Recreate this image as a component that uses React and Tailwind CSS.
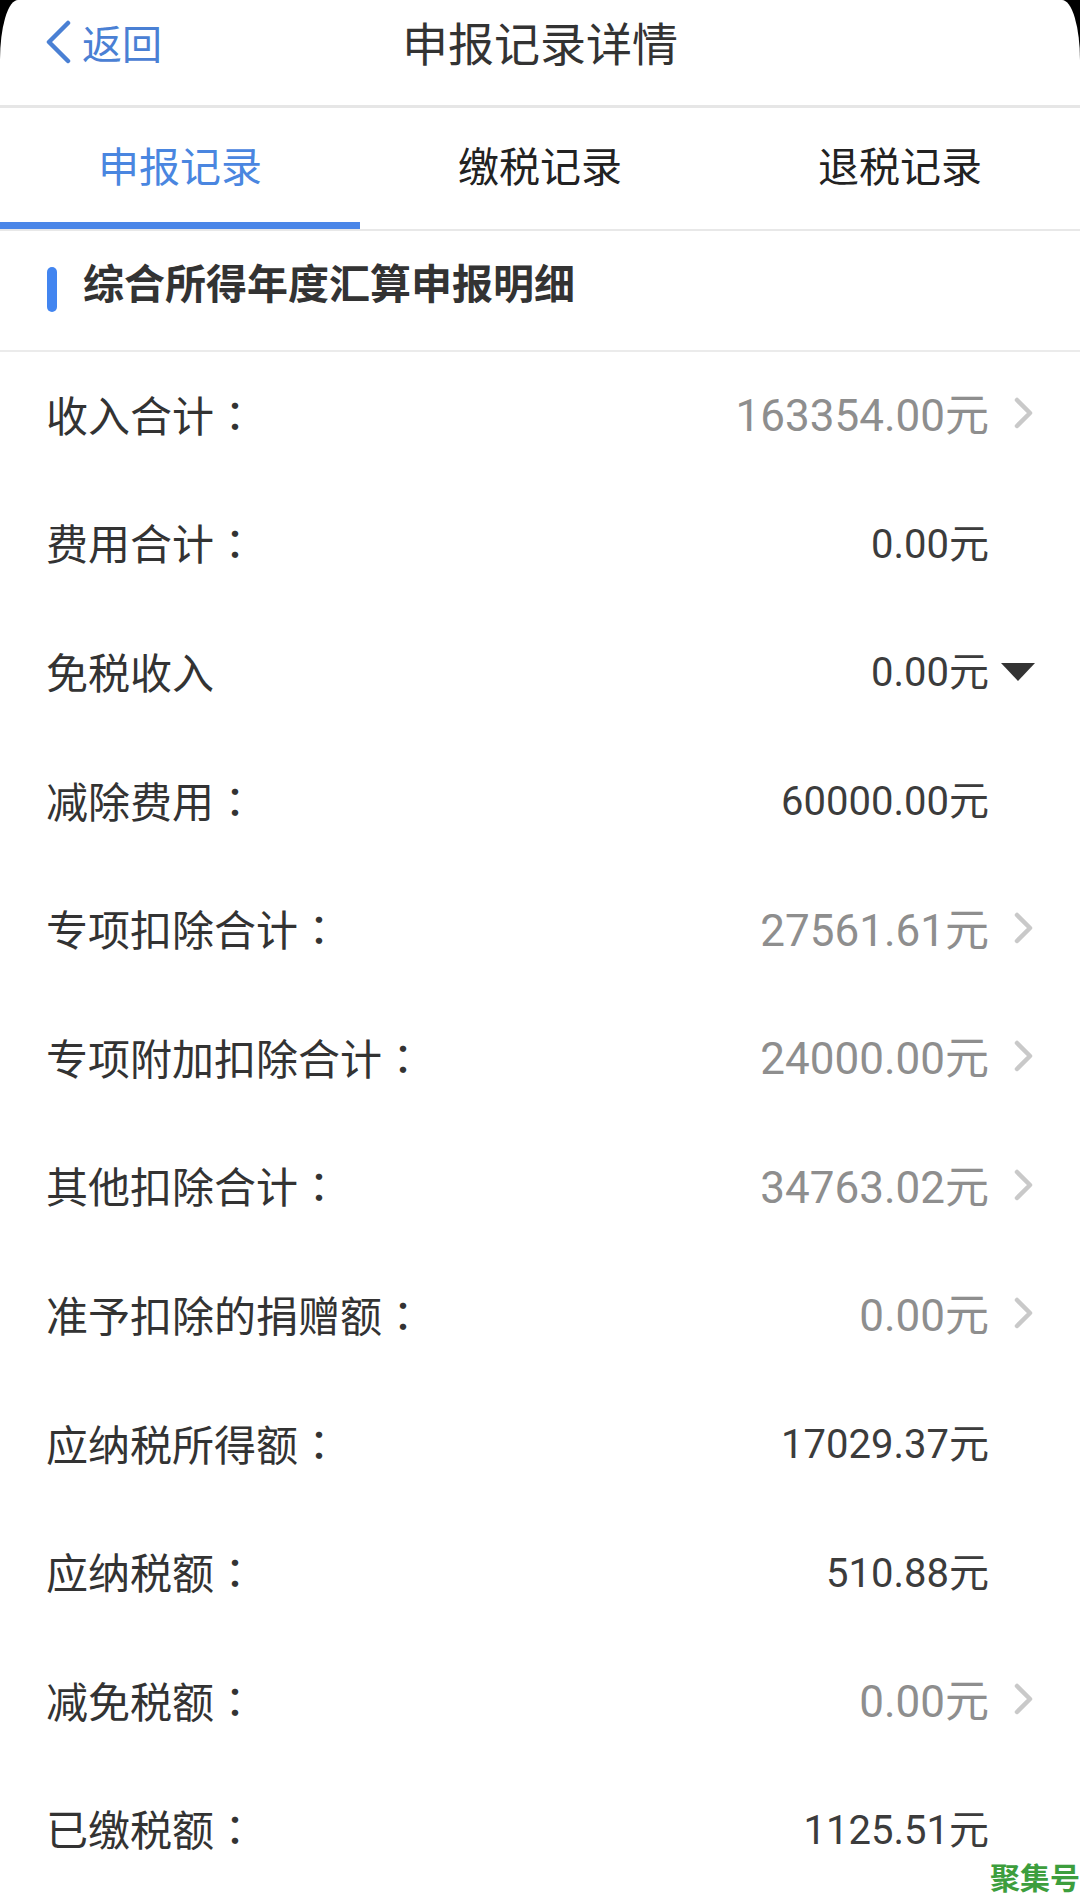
import React from 'react'

const rows = [
  { label: '收入合计', colon: true, value: '163354.00元', muted: true, icon: 'chevron' },
  { label: '费用合计', colon: true, value: '0.00元' },
  { label: '免税收入', value: '0.00元', icon: 'caret' },
  { label: '减除费用', colon: true, value: '60000.00元' },
  { label: '专项扣除合计', colon: true, value: '27561.61元', muted: true, icon: 'chevron' },
  { label: '专项附加扣除合计', colon: true, value: '24000.00元', muted: true, icon: 'chevron' },
  { label: '其他扣除合计', colon: true, value: '34763.02元', muted: true, icon: 'chevron' },
  { label: '准予扣除的捐赠额', colon: true, value: '0.00元', muted: true, icon: 'chevron' },
  { label: '应纳税所得额', colon: true, value: '17029.37元' },
  { label: '应纳税额', colon: true, value: '510.88元' },
  { label: '减免税额', colon: true, value: '0.00元', muted: true, icon: 'chevron' },
  { label: '已缴税额', colon: true, value: '1125.51元' },
]

const cjk = "font-['Noto_Sans_CJK_SC',sans-serif]"
const num = "font-['Roboto','Noto_Sans_CJK_SC',sans-serif]"

const Chevron = () => (
  <svg width="22" height="32" viewBox="0 0 22 32" className="mb-[6px]">
    <polyline points="4,3 17,16 4,29" fill="none" stroke="#c9c9c9" strokeWidth="4.5" strokeLinecap="round" strokeLinejoin="round" />
  </svg>
)

const Caret = () => (
  <svg width="34" height="18" viewBox="0 0 34 18" className="mb-[2px]">
    <polygon points="0,0 34,0 17,18" fill="#333333" />
  </svg>
)

const Row = ({ label, colon, value, muted, icon }) => (
  <div className="flex items-center h-[128.6px] pl-[46px] pr-[45px]">
    <div className={`flex-1 mb-[6px] text-[42px] text-[#333333] ${cjk}`}>
      {label}
      {colon && <span className="font-['Noto_Sans_CJK_TC',sans-serif]">：</span>}
    </div>
    <div className={`${num} ${muted ? 'text-[44px] text-[#8e8e8e]' : 'text-[40px] text-[#3c3c3c]'}`}>{value}</div>
    <div className="w-[46px] flex justify-end items-center">
      {icon === 'chevron' && <Chevron />}
      {icon === 'caret' && <Caret />}
    </div>
  </div>
)

const App = () => {
  return (
    <div className="bg-black w-[1080px] min-h-[1899px]">
      <div className={`relative bg-white min-h-[1899px] rounded-tl-[18px_60px] rounded-tr-[18px_60px] ${cjk}`}>
        {/* Header */}
        <div className="h-[108px] border-b-[3px] border-[#e6e6e6]">
          <div className="relative h-[82px] flex items-center justify-center">
            <div className="absolute left-[44px] top-[20px] flex items-center gap-[10px]">
              <svg width="28" height="44" viewBox="0 0 28 44">
                <polyline points="24,3 5,22 24,41" fill="none" stroke="#4a80d4" strokeWidth="4.5" strokeLinecap="round" strokeLinejoin="round" />
              </svg>
              <span className="text-[40px] leading-none text-[#4a80d4]">返回</span>
            </div>
            <span className="text-[46px] text-[#333333]">申报记录详情</span>
          </div>
        </div>

        {/* Tabs */}
        <div className="grid grid-cols-3 border-b-2 border-[#e8e8e8]">
          {['申报记录', '缴税记录', '退税记录'].map((t, i) => (
            <div key={t} className="flex flex-col">
              <div className={`h-[114px] flex items-center justify-center text-[41px] ${i === 0 ? 'text-[#4a86e0]' : 'text-[#222222]'}`}>{t}</div>
              <div className={`h-[7px] ${i === 0 ? 'bg-[#4a86e8]' : ''}`}></div>
            </div>
          ))}
        </div>

        {/* Section title */}
        <div className="h-[121px] flex items-start pt-[20px] pl-[47px] border-b-2 border-[#ebebeb]">
          <div className="w-[10px] h-[45px] rounded-full bg-[#4285f0] mt-[16px]"></div>
          <div className="ml-[26px] text-[41px] font-bold text-[#333333]">综合所得年度汇算申报明细</div>
        </div>

        {/* Rows */}
        {rows.map((r) => (
          <Row key={r.label} {...r} />
        ))}

        <div className="absolute right-0 bottom-[8px] text-[30px] font-bold leading-none text-[#3d9e3d]">聚集号</div>
      </div>
    </div>
  )
}

export default App
